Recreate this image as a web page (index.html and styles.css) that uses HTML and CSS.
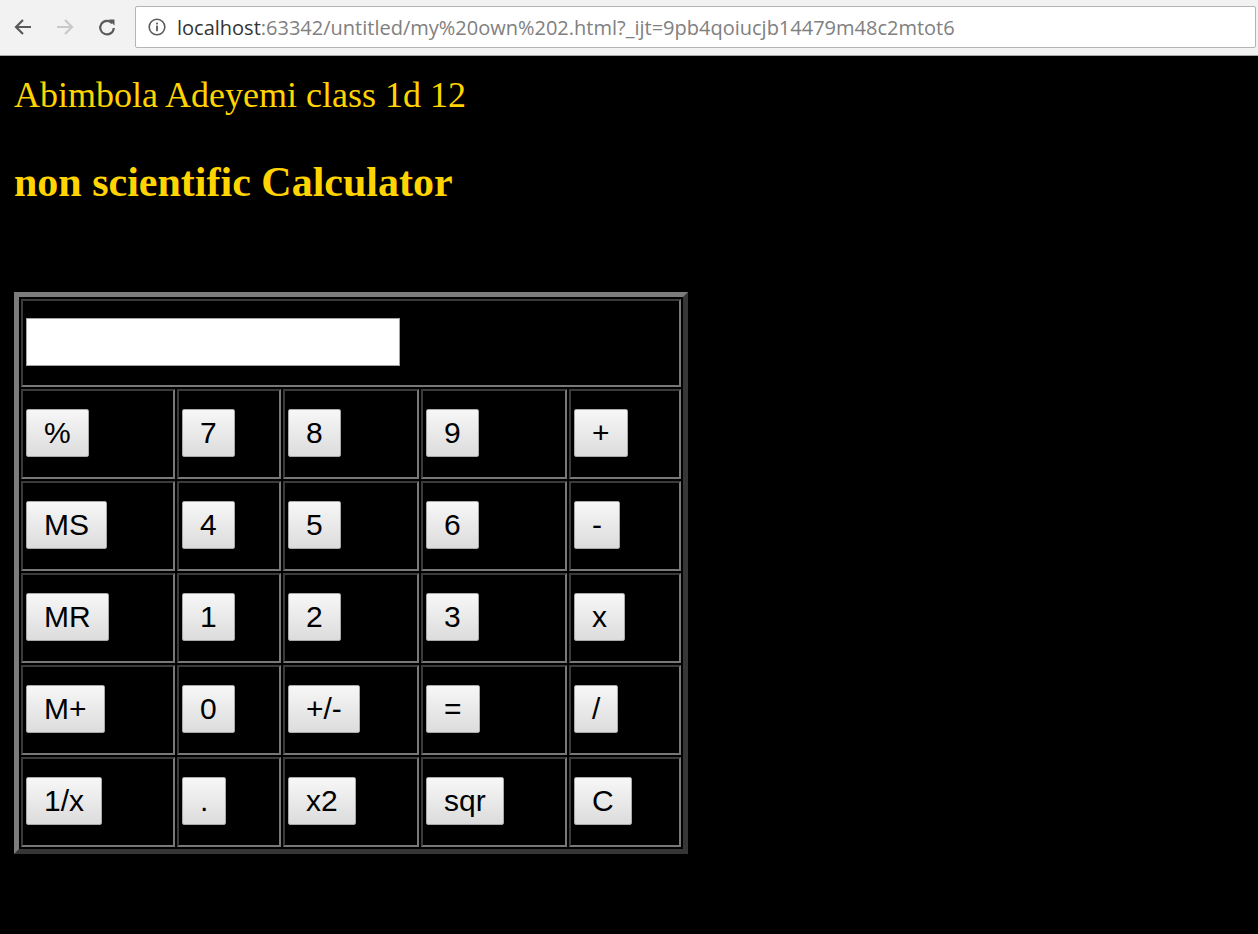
FILE: index.html
```html
<!DOCTYPE html>
<html lang="en">
<head>
<meta charset="utf-8">
<title>Calculator</title>
<link rel="stylesheet" href="styles.css">
</head>
<body>
<header class="browser">
  <nav class="nav">
    <svg class="nav-icon" width="20" height="20" viewBox="0 0 20 20"><path d="M18 10H3M10 3L3 10L10 17" fill="none" stroke="#5a5a5a" stroke-width="2.2"/></svg>
    <svg class="nav-icon" width="20" height="20" viewBox="0 0 20 20"><path d="M2 10H17M10 3L17 10L10 17" fill="none" stroke="#c8c8c8" stroke-width="2.2"/></svg>
    <svg class="nav-icon" width="20" height="20" viewBox="0 0 20 20"><path d="M15.2 6.2A6.8 6.8 0 1 0 16.8 11" fill="none" stroke="#5a5a5a" stroke-width="2.2"/><path d="M11.5 2.5H17.5V8.5Z" fill="#5a5a5a"/></svg>
  </nav>
  <div class="omnibox">
    <svg class="info" width="20" height="20" viewBox="0 0 20 20"><circle cx="10" cy="10" r="7.8" fill="none" stroke="#5a5a5a" stroke-width="1.6"/><rect x="9.1" y="8.6" width="1.8" height="5.6" fill="#5a5a5a"/><rect x="9.1" y="5.6" width="1.8" height="1.8" fill="#5a5a5a"/></svg>
    <span class="url"><span class="host">localhost</span><span class="rest">:63342/untitled/my%20own%202.html?_ijt=9pb4qoiucjb14479m48c2mtot6</span></span>
  </div>
</header>
<main class="page">
  <p class="author">Abimbola Adeyemi class 1d 12</p>
  <h1 class="title">non scientific Calculator</h1>
  <table class="calc">
    <tr>
      <td class="screen-cell" colspan="5"><input class="screen" type="text"></td>
    </tr>
    <tr>
      <td class="c1"><button class="key">%</button></td>
      <td class="c2"><button class="key">7</button></td>
      <td class="c3"><button class="key">8</button></td>
      <td class="c4"><button class="key">9</button></td>
      <td class="c5"><button class="key">+</button></td>
    </tr>
    <tr>
      <td class="c1"><button class="key">MS</button></td>
      <td class="c2"><button class="key">4</button></td>
      <td class="c3"><button class="key">5</button></td>
      <td class="c4"><button class="key">6</button></td>
      <td class="c5"><button class="key">-</button></td>
    </tr>
    <tr>
      <td class="c1"><button class="key">MR</button></td>
      <td class="c2"><button class="key">1</button></td>
      <td class="c3"><button class="key">2</button></td>
      <td class="c4"><button class="key">3</button></td>
      <td class="c5"><button class="key">x</button></td>
    </tr>
    <tr>
      <td class="c1"><button class="key">M+</button></td>
      <td class="c2"><button class="key">0</button></td>
      <td class="c3"><button class="key">+/-</button></td>
      <td class="c4"><button class="key">=</button></td>
      <td class="c5"><button class="key">/</button></td>
    </tr>
    <tr>
      <td class="c1"><button class="key">1/x</button></td>
      <td class="c2"><button class="key">.</button></td>
      <td class="c3"><button class="key">x2</button></td>
      <td class="c4"><button class="key">sqr</button></td>
      <td class="c5"><button class="key">C</button></td>
    </tr>
  </table>
</main>
</body>
</html>
```
FILE: styles.css
```css
html, body {
  margin: 0;
  padding: 0;
  background: #000;
}

body {
  height: 934px;
  overflow: hidden;
}

.browser {
  height: 55px;
  background: #f2f2f2;
  border-bottom: 1px solid #a8a8a8;
  display: flex;
  align-items: flex-start;
  font-family: "Open Sans", "Noto Sans", sans-serif;
}

.nav {
  display: flex;
  align-items: center;
  gap: 22px;
  padding: 17px 0 0 13px;
  width: 135px;
  box-sizing: border-box;
}

.nav-icon {
  display: block;
}

.omnibox {
  flex: 1;
  height: 42px;
  margin: 6px 2px 0 0;
  box-sizing: border-box;
  background: #fff;
  border: 1px solid #b4b4b4;
  border-radius: 2px;
  display: flex;
  align-items: center;
  padding-left: 11px;
  gap: 10px;
}

.info {
  display: block;
}

.url {
  font-size: 20px;
  white-space: nowrap;
}

.host {
  color: #333;
}

.rest {
  color: #808080;
}

.page {
  padding: 19px 0 0 14px;
}

.author {
  margin: 0;
  font-family: "Liberation Serif", "Times New Roman", serif;
  font-size: 36px;
  line-height: 40px;
  color: #ffd400;
  font-weight: normal;
}

.title {
  margin: 43px 0 0 0;
  font-family: "Liberation Serif", "Times New Roman", serif;
  font-size: 42px;
  line-height: 48px;
  color: #ffd400;
  font-weight: bold;
}

.calc {
  margin-top: 86px;
  border-collapse: separate;
  border-spacing: 2px;
  border-style: solid;
  border-width: 5px;
  border-color: #7c7c7c #363636 #363636 #7c7c7c;
}

.calc td {
  box-sizing: border-box;
  border-style: solid;
  border-width: 2px;
  border-color: #3a3a3a #787878 #787878 #3a3a3a;
  padding: 18px 3px 20px;
  vertical-align: middle;
}

.calc td.screen-cell {
  padding: 17px 3px 19px;
}

.c1 { width: 154px; }
.c2 { width: 104px; }
.c3 { width: 136px; }
.c4 { width: 146px; }
.c5 { width: 112px; }

.screen {
  display: block;
  box-sizing: border-box;
  width: 374px;
  height: 48px;
  margin: 0;
  padding: 0;
  background: #fff;
  border: 1px solid #a3a3a3;
}

.key {
  display: block;
  box-sizing: border-box;
  height: 48px;
  margin: 0;
  padding: 0 17px;
  font-family: "Liberation Sans", Arial, sans-serif;
  font-size: 30px;
  line-height: 46px;
  color: #000;
  background: linear-gradient(#f7f7f7, #dcdcdc);
  border: 1px solid #a9a9a9;
  border-radius: 2px;
}
```
